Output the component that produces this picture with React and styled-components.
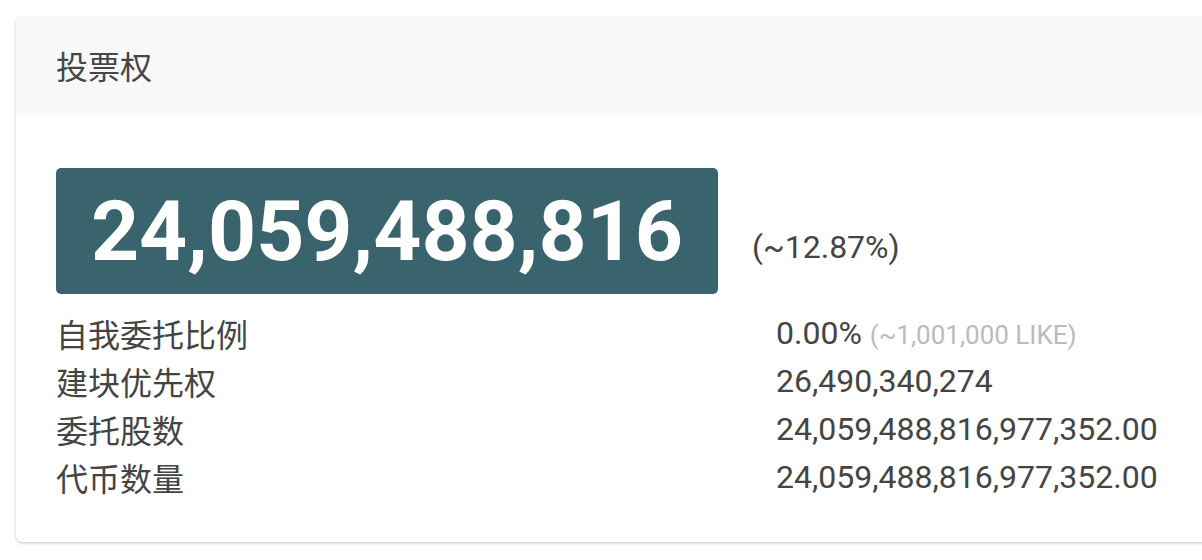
import React from "react";
import styled, { createGlobalStyle } from "styled-components";

const GlobalStyle = createGlobalStyle`
  html, body {
    margin: 0;
    padding: 0;
    background: #fff;
    overflow: hidden;
  }
  body {
    font-family: Roboto, "Noto Sans CJK SC", sans-serif;
    color: #444;
  }
`;

const Page = styled.div`
  padding: 17px 0 0 16px;
  width: 1202px;
  height: 560px;
  box-sizing: border-box;
`;

const Card = styled.div`
  width: 1200px;
  background: #fff;
  border-radius: 6px;
  box-shadow: 0 1px 3px rgba(0, 0, 0, 0.25);
  overflow: hidden;
`;

const CardHeader = styled.div`
  height: 96px;
  background: #f8f8f8;
  display: flex;
  align-items: center;
  padding-left: 40px;
  font-size: 32px;
  color: #464646;
`;

const CardBody = styled.div`
  padding: 55px 0 41px 40px;
`;

const PowerRow = styled.div`
  display: flex;
  align-items: flex-end;
  gap: 34px;
`;

const PowerBox = styled.div`
  width: 662px;
  height: 126px;
  box-sizing: border-box;
  background: #3a646d;
  border-radius: 5px;
  color: #fff;
  font-weight: 700;
  font-size: 84px;
  display: flex;
  align-items: center;
  justify-content: center;
`;

const Percent = styled.div`
  font-size: 32px;
  color: #444;
  padding-bottom: 28px;
`;

const Stats = styled.div`
  margin-top: 15px;
  display: grid;
  grid-template-columns: 720px 1fr;
  grid-auto-rows: 48px;
  align-items: center;
  color: #444;
`;

const Label = styled.div`
  font-size: 32px;
`;

const Value = styled.div`
  font-size: 32px;
`;

const Note = styled.span`
  font-size: 26px;
  color: #bbb;
`;

const stats = [
  { label: "自我委托比例", value: "0.00%", note: "(~1,001,000 LIKE)" },
  { label: "建块优先权", value: "26,490,340,274" },
  { label: "委托股数", value: "24,059,488,816,977,352.00" },
  { label: "代币数量", value: "24,059,488,816,977,352.00" },
];

export default function App() {
  return (
    <>
      <GlobalStyle />
      <Page>
        <Card>
          <CardHeader>投票权</CardHeader>
          <CardBody>
            <PowerRow>
              <PowerBox>24,059,488,816</PowerBox>
              <Percent>(~12.87%)</Percent>
            </PowerRow>
            <Stats>
              {stats.map((s) => (
                <React.Fragment key={s.label}>
                  <Label>{s.label}</Label>
                  <Value>
                    {s.value} {s.note && <Note>{s.note}</Note>}
                  </Value>
                </React.Fragment>
              ))}
            </Stats>
          </CardBody>
        </Card>
      </Page>
    </>
  );
}
